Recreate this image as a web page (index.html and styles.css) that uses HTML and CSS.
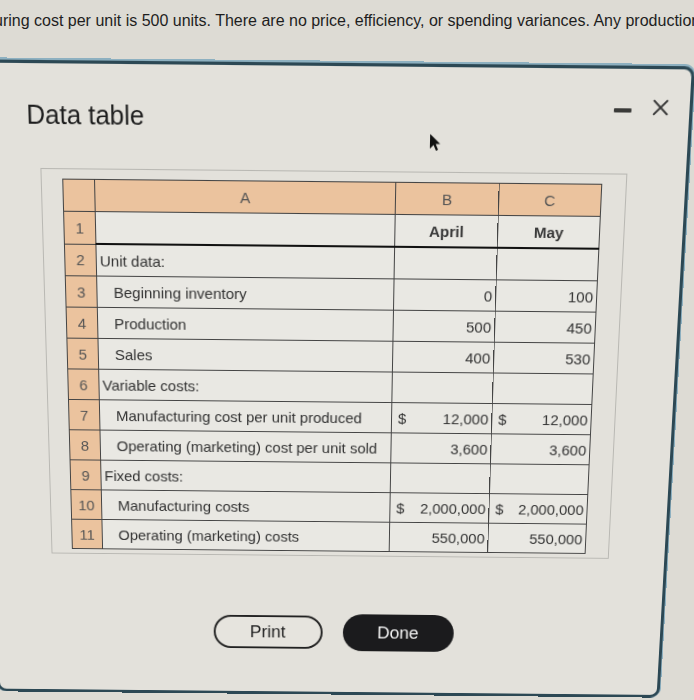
FILE: index.html
```html
<!DOCTYPE html>
<html>
<head>
<meta charset="utf-8">
<link rel="stylesheet" href="styles.css">
</head>
<body>
<div class="question"><span class="q-text">uring cost per unit is 500 units. There are no price, efficiency, or spending variances. Any production</span></div>
<div class="modal">
  <div class="modal-head">
    <h1 class="title">Data table</h1>
    <div class="controls">
      <span class="minimize"></span>
      <svg class="close" width="16" height="16" viewBox="0 0 16 16"><path d="M1.2 1.2 L14.8 14.8 M14.8 1.2 L1.2 14.8" stroke="#333" stroke-width="1.9" fill="none"/></svg>
    </div>
  </div>
  <svg class="cursor" width="12" height="18" viewBox="0 0 12 18"><path d="M1 1 L1 15 L4.5 11.5 L7 17 L9 16 L6.6 10.6 L11 10.6 Z" fill="#111"/></svg>
  <div class="frame">
    <table class="sheet">
      <colgroup><col class="c-num"><col class="c-a"><col class="c-b"><col class="c-c"></colgroup>
      <tr class="hdr"><td class="rn"></td><td>A</td><td>B</td><td>C</td></tr>
      <tr class="r1"><td class="rn">1</td><td class="lbl"></td><td class="mon">April</td><td class="mon">May</td></tr>
      <tr><td class="rn">2</td><td class="lbl">Unit data:</td><td></td><td></td></tr>
      <tr><td class="rn">3</td><td class="lbl ind">Beginning inventory</td><td class="num">0</td><td class="num">100</td></tr>
      <tr><td class="rn">4</td><td class="lbl ind">Production</td><td class="num">500</td><td class="num">450</td></tr>
      <tr><td class="rn">5</td><td class="lbl ind">Sales</td><td class="num">400</td><td class="num">530</td></tr>
      <tr><td class="rn">6</td><td class="lbl">Variable costs:</td><td></td><td></td></tr>
      <tr><td class="rn">7</td><td class="lbl ind">Manufacturing cost per unit produced</td><td class="num"><span class="cur">$</span>12,000</td><td class="num"><span class="cur">$</span>12,000</td></tr>
      <tr><td class="rn">8</td><td class="lbl ind">Operating (marketing) cost per unit sold</td><td class="num">3,600</td><td class="num">3,600</td></tr>
      <tr><td class="rn">9</td><td class="lbl">Fixed costs:</td><td></td><td></td></tr>
      <tr><td class="rn">10</td><td class="lbl ind">Manufacturing costs</td><td class="num"><span class="cur">$</span>2,000,000</td><td class="num"><span class="cur">$</span>2,000,000</td></tr>
      <tr><td class="rn">11</td><td class="lbl ind">Operating (marketing) costs</td><td class="num">550,000</td><td class="num">550,000</td></tr>
    </table>
  </div>
  <div class="actions">
    <button class="btn btn-print">Print</button>
    <button class="btn btn-done">Done</button>
  </div>
</div>
</body>
</html>
```
FILE: styles.css
```css
html, body {
  margin: 0;
  padding: 0;
  background: #dddbd4;
  overflow: hidden;
  width: 694px;
  height: 700px;
  font-family: "Liberation Sans", Arial, sans-serif;
}
.question {
  height: 72px;
  box-sizing: border-box;
  padding-top: 11px;
  white-space: nowrap;
  overflow: hidden;
}
.q-text {
  display: block;
  margin-left: -6px;
  font-size: 16px;
  line-height: 20px;
  color: #1e1e1e;
}
/* the photo is taken at a slight angle: the dialog recedes towards the bottom */
.modal {
  position: relative;
  margin-left: -15px;
  width: 693px;
  height: 641px;
  box-sizing: border-box;
  border: 3px solid #2c4854;
  border-radius: 10px;
  background: #e3e1db;
  box-shadow: 0 -1px 0 1px #8db0c0;
  transform-origin: 346px 293px;
  transform: rotate(0.55deg) perspective(1000px) rotateX(-7.7deg);
}
.modal-head {
  display: flex;
  align-items: flex-start;
  padding: 28px 20px 0 46px;
}
.title {
  flex: 1;
  margin: 5px 0 0;
  font-size: 25px;
  line-height: 30px;
  font-weight: normal;
  color: #1d1d1d;
}
.controls {
  display: flex;
  align-items: flex-start;
  gap: 20px;
}
.minimize {
  display: block;
  width: 17px;
  height: 4px;
  margin-top: 9px;
  background: #3a3a38;
  border-radius: 1px;
}
.close { display: block; }
.cursor {
  position: absolute;
  left: 436px;
  top: 62px;
}
.frame {
  margin: 36px 0 0 58px;
  width: 572px;
  box-sizing: border-box;
  border: 1px solid #b9b8b3;
  padding: 9px 24px 4px 20px;
}
.sheet {
  width: 526px;
  table-layout: fixed;
  border-collapse: collapse;
  font-size: 15px;
  color: #333;
}
.c-num { width: 31px; }
.c-a { width: 294px; }
.c-b { width: 101px; }
.c-c { width: 100px; }
.sheet td {
  height: 30px;
  border: 1px solid #444;
  background: #e9e8e3;
  padding: 0 3px;
  white-space: nowrap;
  overflow: hidden;
}
.sheet .hdr td {
  background: #ebc39e;
  color: #555;
  text-align: center;
}
.sheet td.rn {
  background: #ebc39e;
  color: #555;
  text-align: center;
  padding: 0;
}
.sheet .r1 td:not(.rn) { border-bottom: 2px solid #111; }
.sheet td.lbl { padding-left: 3px; }
.sheet td.ind { padding-left: 16px; }
.sheet td.mon {
  text-align: center;
  font-weight: bold;
  color: #3a3a3a;
}
.sheet td.num { text-align: right; }
.cur { float: left; margin-left: 3px; }
.actions {
  display: flex;
  justify-content: center;
  align-items: center;
  gap: 21px;
  height: 42px;
  margin-top: 61px;
  padding-left: 9px;
}
.btn {
  font-family: "Liberation Sans", Arial, sans-serif;
  font-size: 18px;
  border-radius: 21px;
  box-sizing: border-box;
  cursor: pointer;
}
.btn-print {
  width: 113px;
  height: 36px;
  border: 2px solid #222;
  background: #e6e4de;
  color: #222;
}
.btn-done {
  width: 115px;
  height: 40px;
  border: none;
  background: #1b1b1d;
  color: #f4f4f4;
}
```
